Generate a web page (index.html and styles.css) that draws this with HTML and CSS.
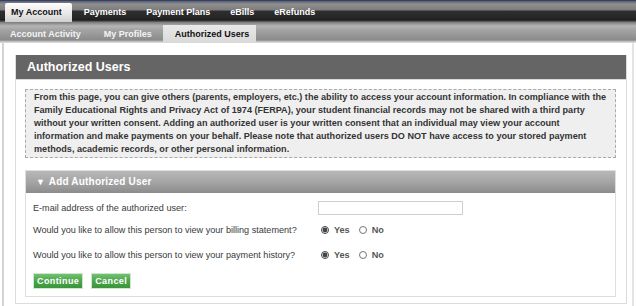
FILE: index.html
```html
<!DOCTYPE html>
<html lang="en">
<head>
    <meta charset="UTF-8">
    <title>Authorized Users</title>
    <link rel="stylesheet" href="styles.css">
</head>
<body>
    <div class="main-nav">
        <a class="tab active">My Account</a>
        <a class="tab">Payments</a>
        <a class="tab">Payment Plans</a>
        <a class="tab">eBills</a>
        <a class="tab">eRefunds</a>
    </div>
    <div class="sub-nav">
        <a class="tab">Account Activity</a>
        <a class="tab">My Profiles</a>
        <a class="tab active">Authorized Users</a>
    </div>

    <div class="page">
        <div class="panel">
            <h1 class="panel-title">Authorized Users</h1>
            <div class="panel-body">
                <div class="notice">
                    From this page, you can give others (parents, employers, etc.) the ability to access your account information. In compliance with the Family Educational Rights and Privacy Act of 1974 (FERPA), your student financial records may not be shared with a third party without your written consent. Adding an authorized user is your written consent that an individual may view your account information and make payments on your behalf. Please note that authorized users DO NOT have access to your stored payment methods, academic records, or other personal information.
                </div>

                <div class="section">
                    <div class="section-title"><span class="arrow">&#9660;</span> Add Authorized User</div>
                    <div class="section-body">
                        <div class="row">
                            <label>E-mail address of the authorized user:</label>
                            <input type="text" class="email">
                        </div>
                        <div class="row">
                            <label>Would you like to allow this person to view your billing statement?</label>
                            <div class="choices">
                                <input type="radio" name="bill" checked> <span>Yes</span>
                                <input type="radio" name="bill"> <span>No</span>
                            </div>
                        </div>
                        <div class="row last">
                            <label>Would you like to allow this person to view your payment history?</label>
                            <div class="choices">
                                <input type="radio" name="hist" checked> <span>Yes</span>
                                <input type="radio" name="hist"> <span>No</span>
                            </div>
                        </div>
                        <div class="buttons">
                            <button class="btn">Continue</button>
                            <button class="btn">Cancel</button>
                        </div>
                    </div>
                </div>
            </div>
        </div>
    </div>
</body>
</html>
```

FILE: styles.css
```css
body {
    margin: 0;
    font-family: "Liberation Sans", Arial, sans-serif;
    color: #333;
    background: #fff;
    width: 636px;
    height: 306px;
    overflow: hidden;
}

/* Top tab bar */
.main-nav {
    display: flex;
    height: 19px;
    padding: 2px 0 0 5px;
    border-top: 1px solid #2d3f7c;
    background: linear-gradient(#5e5e5e 0, #8f8f8f 3px, #7d7d7d 9px, #2e2e2e 10px, #262626 17px, #1b1b1b 19px, #6d6d6d 21px);
}

.tab {
    font-size: 9px;
    font-weight: bold;
    color: #fff;
    white-space: nowrap;
}

.main-nav .tab {
    padding: 0 10px;
    line-height: 18px;
}

.main-nav .active {
    padding: 0 10px 0 6px;
    margin-right: 2px;
    line-height: 19px;
    color: #111;
    background: linear-gradient(#fdfdfd, #e6e6e6 60%, #cfcfcf);
    border-radius: 2px 2px 0 0;
}

.sub-nav {
    display: flex;
    height: 18px;
    padding-top: 3px;
    background: linear-gradient(#7a7a7a 0, #b5b5b5 4px, #a3a3a3 8px, #959595 14px, #8a8a8a 18px, #cfcfcf 20px, #e2e2e2 21px);
}

.sub-nav .tab {
    padding: 0 11px 0 10px;
    line-height: 18px;
    color: #f4f4f4;
}

.sub-nav .tab + .tab {
    padding-left: 12px;
}

.sub-nav .active {
    color: #111;
    background: linear-gradient(#e9e9e9, #d9d9d9);
    padding: 0 7px;
    margin-left: 0;
}

/* Page content */
.page {
    margin: 0 2px;
    padding: 12px 5px 0 11px;
    border-left: 2px solid #d4d4d4;
    border-right: 2px solid #e4e4e4;
    height: 251px;
}

.panel {
    border: 1px solid #dcdcdc;
    border-top: 0;
    height: 248px;
}

.panel-title {
    margin: 0;
    background: #656565;
    color: #fff;
    font-size: 12.5px;
    font-weight: bold;
    line-height: 24px;
    padding-left: 11px;
    border-bottom: 1px solid #d8d8d8;
}

.panel-body {
    padding: 9px 10px 0 9px;
}

.notice {
    background: #efefef;
    border: 1px dashed #a9a9a9;
    padding: 1px 4px 1px 8px;
    font-size: 9.1px;
    font-weight: bold;
    line-height: 13px;
    color: #333;
}

.section {
    margin-top: 12px;
    border: 1px solid #dedede;
}

.section-title {
    background: linear-gradient(#b8b8b8, #a5a5a5 50%, #8c8c8c);
    color: #fff;
    font-size: 10px;
    font-weight: bold;
    line-height: 21px;
    padding-left: 10px;
    letter-spacing: 0.2px;
}

.arrow {
    font-size: 9px;
    margin-right: 1px;
}

.section-body {
    padding: 4px 8px 7px 7px;
}

.row {
    display: grid;
    grid-template-columns: 285px auto;
    align-items: center;
    height: 22px;
    font-size: 9.1px;
    color: #3a3a3a;
}

.row.last {
    margin-top: 3px;
}

.email {
    width: 143px;
    height: 12px;
    box-sizing: content-box;
    padding: 0;
    border: 1px solid #cfcfcf;
    margin: 0;
}

.choices {
    display: flex;
    align-items: center;
    padding-left: 3px;
    font-weight: bold;
    color: #555;
}

.choices input {
    width: 8px;
    height: 8px;
    margin: 0 5px 0 0;
    accent-color: #444;
}

.choices span {
    margin-right: 9px;
}

.buttons {
    display: flex;
    gap: 8px;
    margin-top: 7px;
}

.btn {
    font-family: "Liberation Sans", Arial, sans-serif;
    font-size: 9px;
    font-weight: bold;
    letter-spacing: 0.4px;
    color: #fff;
    background: linear-gradient(#72c172, #4ca54c 50%, #3b963b);
    border: 1px solid #cfe6cf;
    height: 16px;
    padding: 0 3px;
    line-height: 14px;
}
```
